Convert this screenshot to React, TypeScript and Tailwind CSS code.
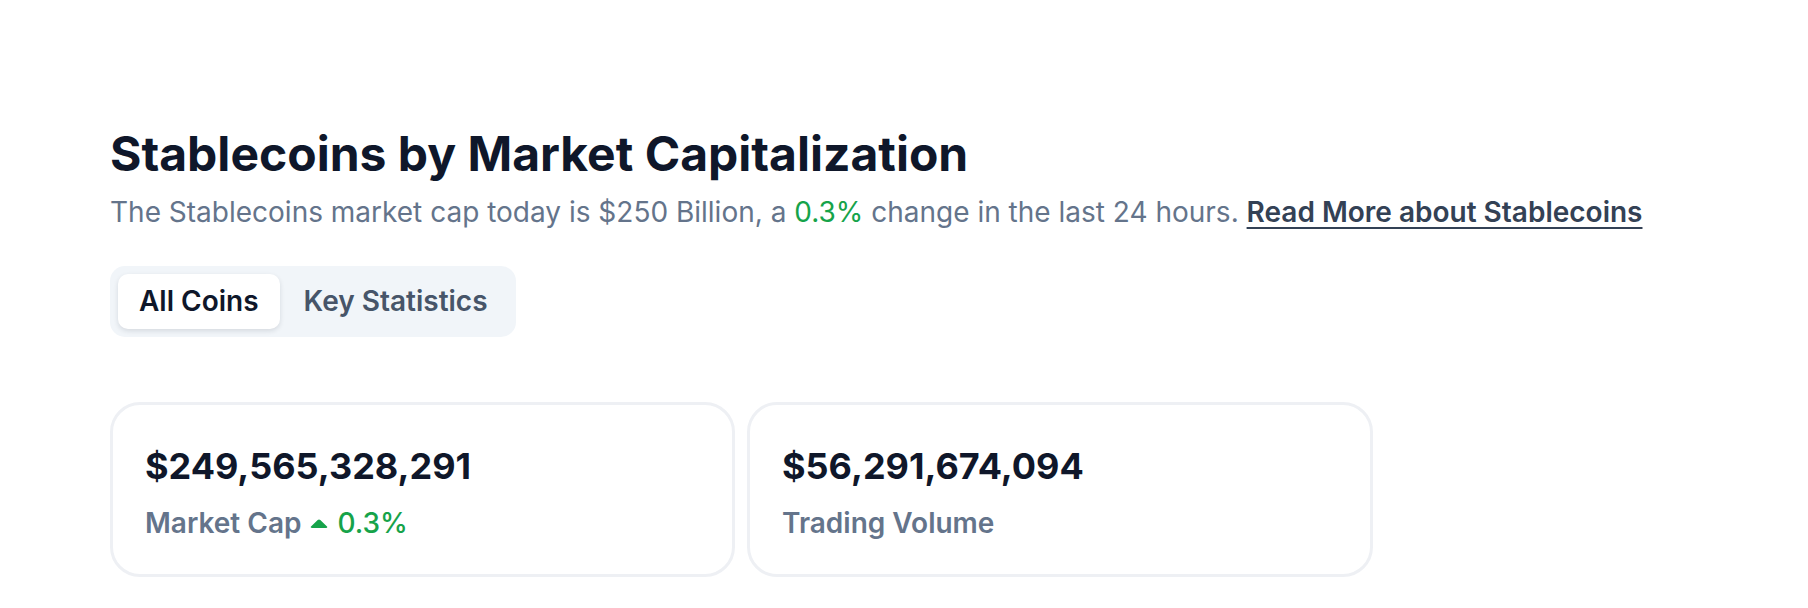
const stats = [
  { value: '$249,565,328,291', label: 'Market Cap', change: '0.3%' },
  { value: '$56,291,674,094', label: 'Trading Volume' },
];

const TriangleUp = () => (
  <svg width="18" height="9" viewBox="0 0 18 9" className="shrink-0">
    <path d="M7.7 1.1a1.8 1.8 0 0 1 2.6 0l6.7 6.3c.6.6.2 1.6-.7 1.6H1.7c-.9 0-1.3-1-.7-1.6z" fill="#16a34a" />
  </svg>
);

export default function App() {
  return (
    <div className="min-h-screen bg-white font-['Inter',sans-serif]">
      <div className="px-[110px] pt-[130px]">
        <h1 className="text-[48px] leading-[48px] font-bold text-[#0f172a]">
          Stablecoins by Market Capitalization
        </h1>
        <p className="mt-[16px] text-[28px] leading-[36px] text-[#64748b]">
          The Stablecoins market cap today is $250 Billion, a{' '}
          <span className="text-[#16a34a]">0.3%</span> change in the last 24 hours.{' '}
          <a href="#" className="font-semibold text-[#334155] underline decoration-2 underline-offset-[5px]">
            Read More about Stablecoins
          </a>
        </p>

        <div className="mt-[36px] inline-flex gap-[4px] rounded-[15px] bg-[#f1f5f9] p-[8px]">
          <button className="rounded-[10px] bg-white px-[21px] py-[10px] text-[28px] leading-[35px] font-semibold text-[#0f172a] shadow-[0_2px_5px_rgba(15,23,42,0.12)]">
            All Coins
          </button>
          <button className="rounded-[10px] px-[20px] py-[10px] text-[28px] leading-[35px] font-semibold text-[#475569]">
            Key Statistics
          </button>
        </div>

        <div className="mt-[65px] grid grid-cols-[625px_626px] gap-[12px]">
          {stats.map((s) => (
            <div key={s.label} className="rounded-[30px] border-[3px] border-[#eef0f4] px-[32px] pt-[41px] pb-[33px]">
              <div className="text-[36px] leading-[40px] font-bold text-[#0f172a]">{s.value}</div>
              <div className="mt-[19px] flex items-center gap-[9px] text-[28px] leading-[36px] font-semibold text-[#64748b]">
                <span>{s.label}</span>
                {s.change && (
                  <>
                    <TriangleUp />
                    <span className="font-medium text-[#16a34a]">{s.change}</span>
                  </>
                )}
              </div>
            </div>
          ))}
        </div>
      </div>
    </div>
  );
}
